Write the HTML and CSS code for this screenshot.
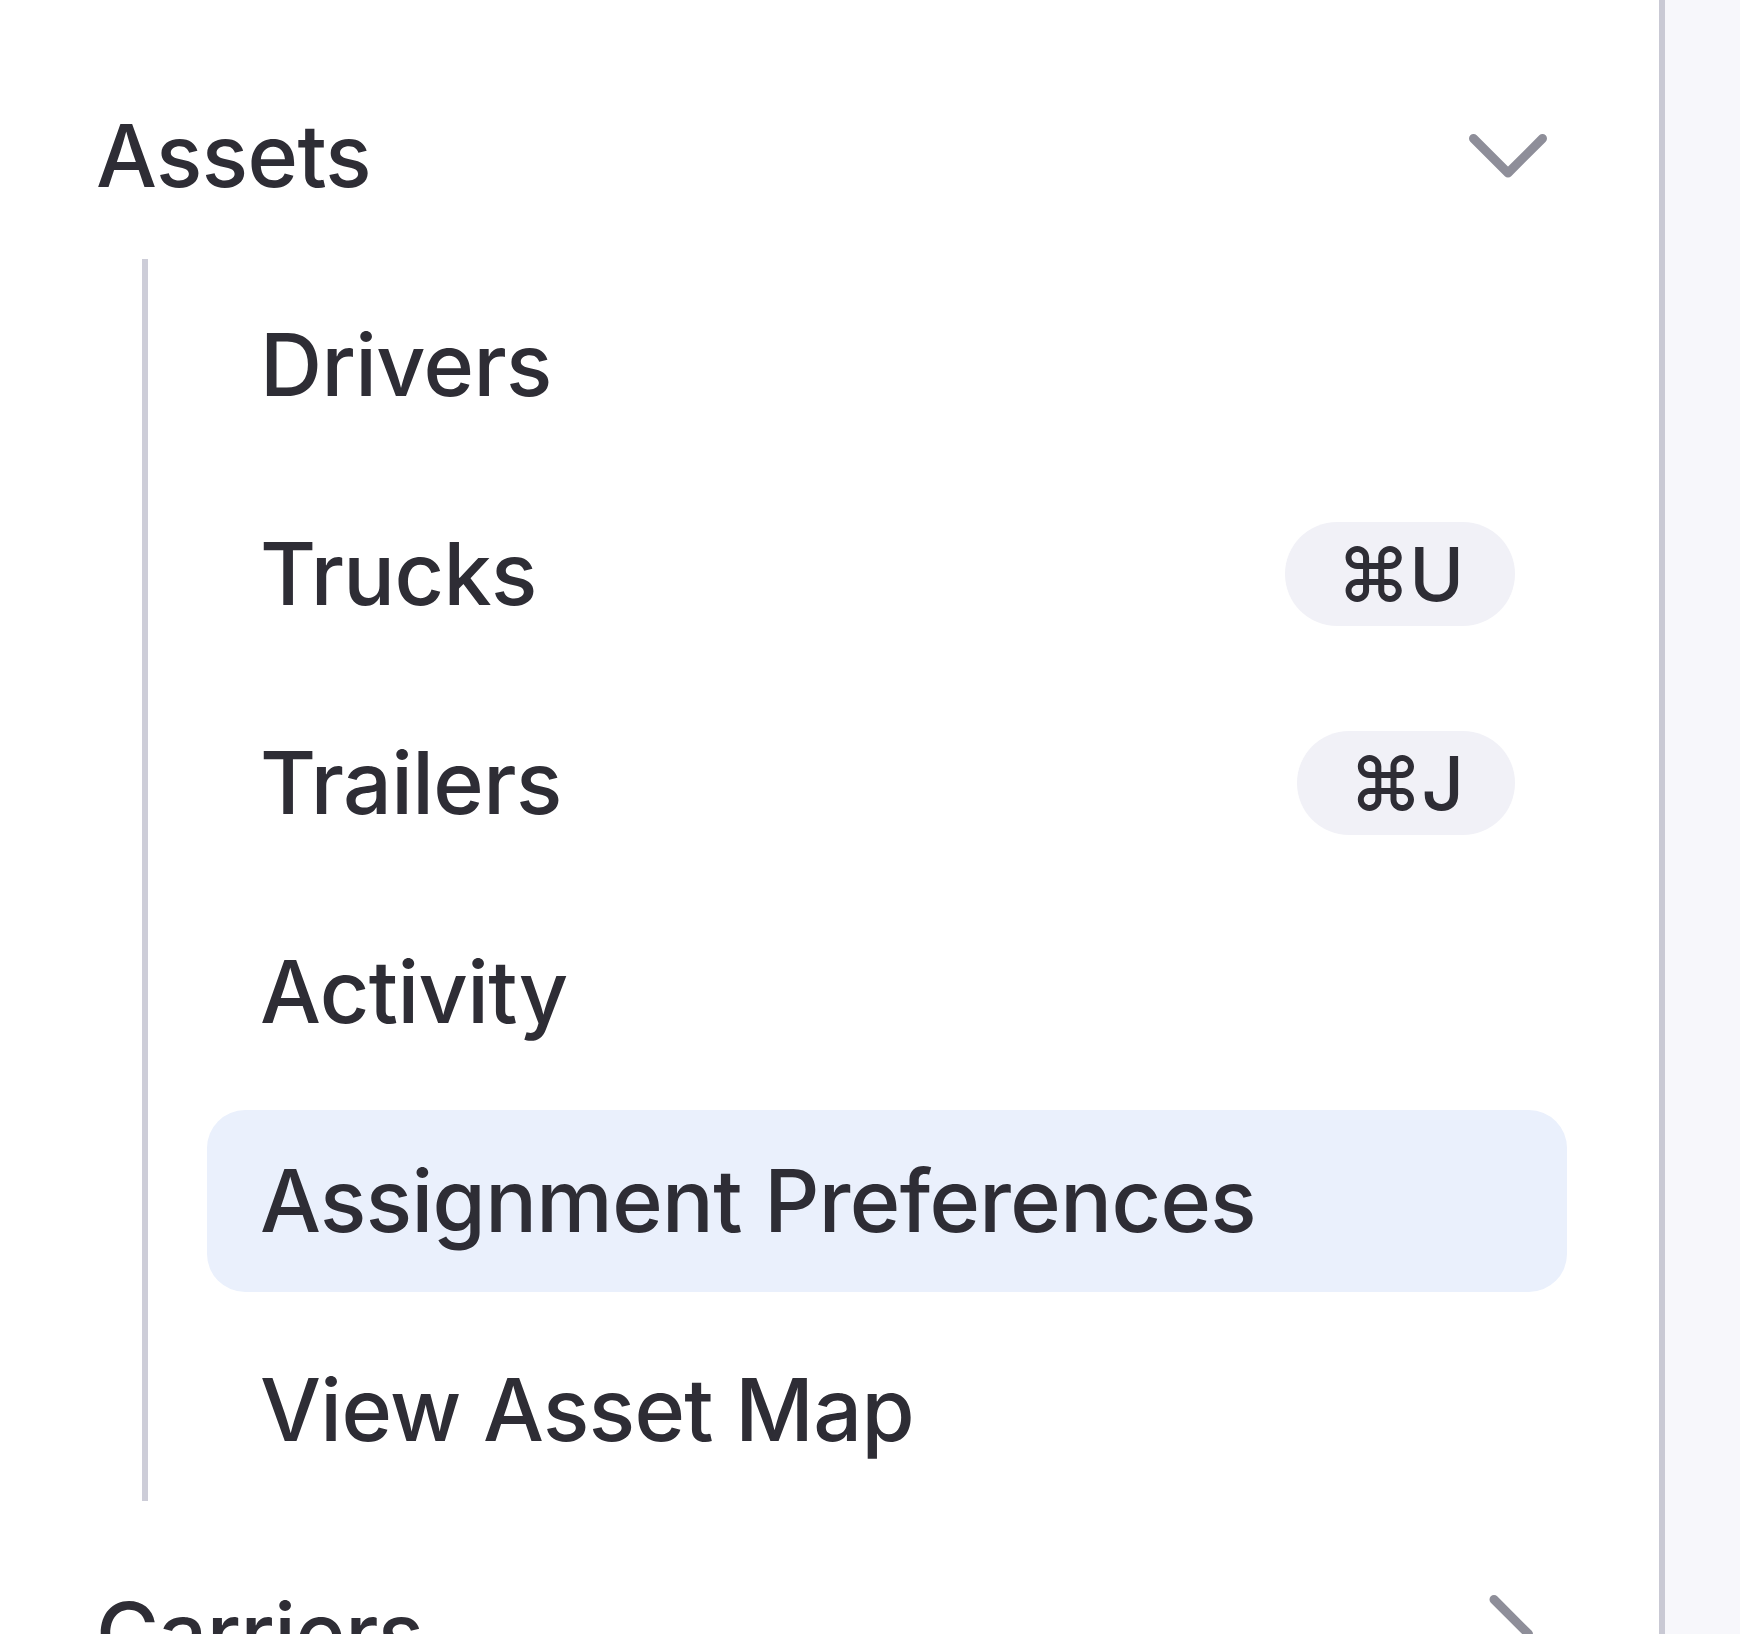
FILE: index.html
```html
<!DOCTYPE html>
<html>
  <head>
    <link rel="stylesheet" href="styles.css">
  </head>
  <body>
    <div class="layout">
      <nav class="sidebar">

        <div class="group">
          <div class="group-head">
            <span class="group-title">Assets</span>
            <span class="icon">
              <svg width="78" height="78" viewBox="0 0 78 78">
                <path d="M4.5 21.5 L39 56 L73.5 21.5" />
              </svg>
            </span>
          </div>
          <div class="sub">
            <a class="item">Drivers</a>
            <a class="item">Trucks <kbd>⌘U</kbd></a>
            <a class="item">Trailers <kbd>⌘J</kbd></a>
            <a class="item">Activity</a>
            <a class="item active">Assignment Preferences</a>
            <a class="item">View Asset Map</a>
          </div>
        </div>

        <div class="group">
          <div class="group-head">
            <span class="group-title">Carriers</span>
            <span class="icon">
              <svg width="78" height="78" viewBox="0 0 78 78">
                <path d="M25 4.5 L59.5 39 L25 73.5" />
              </svg>
            </span>
          </div>
        </div>

      </nav>
      <main class="content"></main>
    </div>
  </body>
</html>
```

FILE: styles.css
```css
html, body {
    margin: 0;
    height: 100%;
    overflow: hidden;
}
body {
    font-family: Inter, "DejaVu Sans", sans-serif;
    color: #2e2d35;
    background-color: #f7f7fb;
}
.layout {
    display: flex;
    height: 100%;
}
.sidebar {
    box-sizing: border-box;
    width: 1665px;
    padding: 65px 92px 0 96px;
    background-color: #ffffff;
    border-right: 6px solid #c9c9d4;
}
.content {
    flex: 1;
}
.group-head {
    display: flex;
    align-items: center;
    justify-content: space-between;
    height: 182px;
    padding-right: 20px;
    font-size: 86px;
    font-weight: 500;
    letter-spacing: -0.6px;
}
.icon {
    display: flex;
}
.icon svg path {
    fill: none;
    stroke: #8e8e99;
    stroke-width: 9;
    stroke-linecap: round;
    stroke-linejoin: round;
}
.sub {
    display: flex;
    flex-direction: column;
    gap: 27px;
    margin: 12px 0 42px 46px;
    padding: 15px 0 0 59px;
    border-left: 6px solid #cdcdd8;
}
.item {
    display: flex;
    align-items: center;
    justify-content: space-between;
    height: 182px;
    padding: 0 52px 0 53px;
    border-radius: 38px;
    font-size: 86px;
    font-weight: 500;
    letter-spacing: -0.6px;
}
.item.active {
    background-color: #eaf0fc;
}
kbd {
    display: inline-block;
    padding: 13px 52px;
    border-radius: 60px;
    background-color: #f1f1f7;
    font-family: Inter, "DejaVu Sans", sans-serif;
    font-size: 74px;
    font-weight: 500;
    line-height: 78px;
    letter-spacing: -1px;
}
```
